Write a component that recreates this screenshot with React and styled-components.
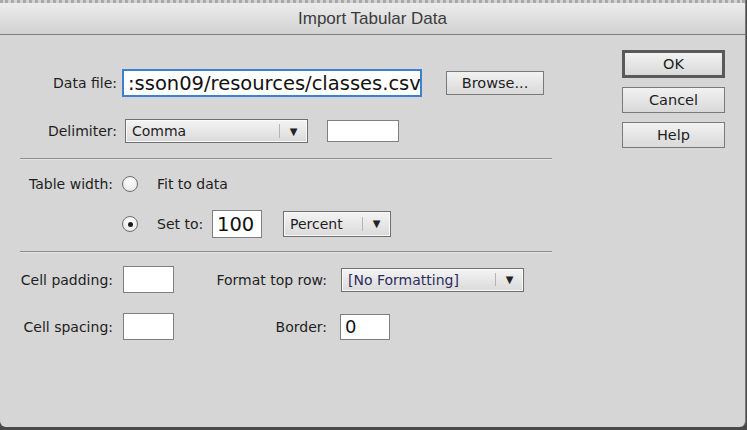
import React from 'react';
import styled, { createGlobalStyle } from 'styled-components';

// ===== Global =====

const GlobalStyle = createGlobalStyle`
  html, body {
    margin: 0;
    padding: 0;
    background: #4a4a4a;
    font-family: "DejaVu Sans", "Liberation Sans", sans-serif;
  }
`;

// ===== Dialog frame =====

const Dialog = styled.div`
  width: 745px;
  height: 427px;
  background: #d6d6d6;
  border-right: 1px solid #7a7a7a;
  border-radius: 0 0 6px 6px;
  display: flex;
  flex-direction: column;
  overflow: hidden;
`;

const TitleBar = styled.div`
  height: 31px;
  border-top: 3px dotted #a9a9a9;
  border-bottom: 1px solid #7c7c7c;
  background: linear-gradient(to bottom, #ececec, #d2d2d2);
  display: flex;
  align-items: center;
  justify-content: center;
  font-family: "Liberation Sans", sans-serif;
  font-size: 17px;
  color: #3b3b3b;
`;

const Body = styled.div`
  flex: 1;
  display: flex;
`;

const Form = styled.div`
  width: 552px;
  padding-top: 34px;
  display: flex;
  flex-direction: column;
`;

const ButtonColumn = styled.div`
  display: flex;
  flex-direction: column;
  gap: 9px;
  padding: 15px 0 0 70px;
`;

// ===== Rows =====

const Row = styled.div`
  display: flex;
  align-items: center;
  height: ${(p) => p.h || 28}px;
  margin-top: ${(p) => p.mt || 0}px;
  padding-left: ${(p) => p.indent || 0}px;
`;

const Label = styled.div`
  width: ${(p) => p.w}px;
  margin-right: ${(p) => p.gap || 0}px;
  text-align: ${(p) => (p.left ? 'left' : 'right')};
  font-size: 14px;
  color: #1e1e1e;
  white-space: nowrap;
  flex-shrink: 0;
`;

const Separator = styled.div`
  margin: ${(p) => p.mt}px 0 0 20px;
  height: 1px;
  background: #8e8e8e;
  box-shadow: 0 1px 0 #e4e4e4;
`;

// ===== Controls =====

const TextBox = styled.div`
  box-sizing: border-box;
  width: ${(p) => p.w}px;
  height: ${(p) => p.h}px;
  margin-left: ${(p) => p.ml || 0}px;
  background: #fff;
  border: ${(p) => (p.focused ? '2px solid #3d80d0' : '1px solid #7f7f7f')};
  font-size: ${(p) => p.fs || 18}px;
  color: #111;
  display: flex;
  align-items: center;
  padding: 0 4px;
  overflow: hidden;
  white-space: nowrap;
  flex-shrink: 0;
`;

const Select = styled.div`
  box-sizing: border-box;
  width: ${(p) => p.w}px;
  height: ${(p) => p.h || 24}px;
  margin-left: ${(p) => p.ml || 0}px;
  border: 1px solid #6f6f6f;
  background: linear-gradient(to bottom, #f4f4f4, #dadada);
  box-shadow: inset 0 0 0 1px #fafafa;
  display: flex;
  align-items: center;
  font-size: 14px;
  color: ${(p) => p.tone || '#1e1e1e'};
  flex-shrink: 0;
`;

const SelectText = styled.span`
  flex: 1;
  padding-left: 6px;
  white-space: nowrap;
`;

const SelectArrow = styled.span`
  width: 27px;
  height: 60%;
  border-left: 1px solid #b5b5b5;
  display: flex;
  align-items: center;
  justify-content: center;
  font-size: 10px;
  color: #222;
`;

const Button = styled.div`
  box-sizing: border-box;
  width: ${(p) => p.w || 103}px;
  height: ${(p) => p.h || 26}px;
  margin-left: ${(p) => p.ml || 0}px;
  border: ${(p) => (p.primary ? '3px solid #5a5a5a' : '1px solid #7a7a7a')};
  background: linear-gradient(to bottom, #f2f2f2, #d9d9d9);
  display: flex;
  align-items: center;
  justify-content: center;
  font-size: 14.5px;
  color: #1e1e1e;
  flex-shrink: 0;
`;

const Radio = styled.div`
  box-sizing: border-box;
  width: 16px;
  height: 16px;
  border-radius: 50%;
  border: 1px solid #6e6e6e;
  background: radial-gradient(circle at 50% 35%, #ffffff, #e2e2e2);
  display: flex;
  align-items: center;
  justify-content: center;
  margin-right: ${(p) => p.gap || 0}px;
  flex-shrink: 0;

  &::after {
    content: '';
    display: ${(p) => (p.checked ? 'block' : 'none')};
    width: 5px;
    height: 5px;
    border-radius: 50%;
    background: #1a1a1a;
  }
`;

// ===== Main Component =====

function App() {
  return (
    <>
      <GlobalStyle />
      <Dialog>
        <TitleBar>Import Tabular Data</TitleBar>
        <Body>
          <Form>
            <Row h={28}>
              <Label w={117} gap={5}>Data file:</Label>
              <TextBox w={300} h={28} fs={19.5} focused>
                :sson09/resources/classes.csv
              </TextBox>
              <Button w={98} h={24} ml={24}>Browse...</Button>
            </Row>
            <Row h={24} mt={22}>
              <Label w={117} gap={8}>Delimiter:</Label>
              <Select w={183}>
                <SelectText>Comma</SelectText>
                <SelectArrow>▼</SelectArrow>
              </Select>
              <TextBox w={72} h={22} ml={19} />
            </Row>

            <Separator mt={15} />

            <Row h={20} mt={15}>
              <Label w={113} gap={9}>Table width:</Label>
              <Radio gap={19} />
              <Label w={100} left>Fit to data</Label>
            </Row>
            <Row h={28} mt={16} indent={122}>
              <Radio checked gap={19} />
              <Label w={46} gap={9} left>Set to:</Label>
              <TextBox w={50} h={28} fs={19.5}>100</TextBox>
              <Select w={108} h={26} ml={21}>
                <SelectText>Percent</SelectText>
                <SelectArrow>▼</SelectArrow>
              </Select>
            </Row>

            <Separator mt={13} />

            <Row h={27} mt={14}>
              <Label w={113} gap={10}>Cell padding:</Label>
              <TextBox w={51} h={27} />
              <Label w={153} gap={14}>Format top row:</Label>
              <Select w={183} tone="#2c2c5e">
                <SelectText>[No Formatting]</SelectText>
                <SelectArrow>▼</SelectArrow>
              </Select>
            </Row>
            <Row h={27} mt={20}>
              <Label w={113} gap={10}>Cell spacing:</Label>
              <TextBox w={51} h={27} />
              <Label w={153} gap={13}>Border:</Label>
              <TextBox w={50} h={26} fs={18}>0</TextBox>
            </Row>
          </Form>

          <ButtonColumn>
            <Button primary h={28}>OK</Button>
            <Button>Cancel</Button>
            <Button>Help</Button>
          </ButtonColumn>
        </Body>
      </Dialog>
    </>
  );
}

export default App;
